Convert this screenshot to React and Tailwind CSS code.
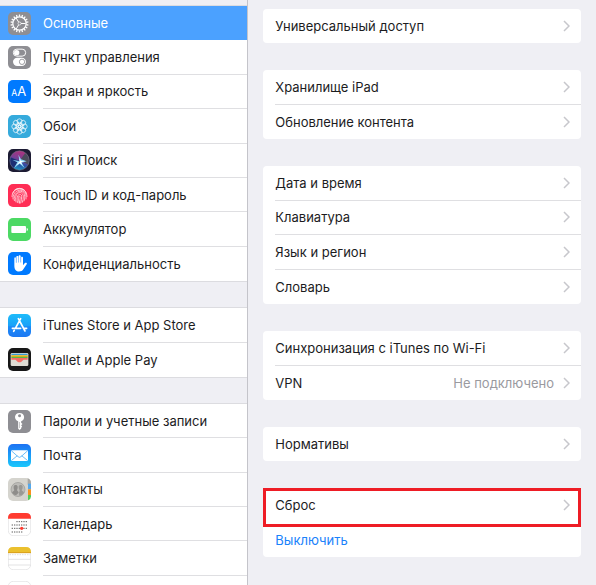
import React from "react";

const Tile = ({ fill, children }) => (
  <svg viewBox="0 0 69 69" className="size-[23px] shrink-0" aria-hidden="true">
    <rect width="69" height="69" rx="15" fill={fill} />
    {children}
  </svg>
);

const range = (n) => Array.from({ length: n }, (_, i) => i);

const GearIcon = () => (
  <Tile fill="#8e8e93">
    <g fill="none" stroke="#fff">
      <circle cx="34.5" cy="34.5" r="20" strokeWidth="3.500" />
      <circle cx="34.5" cy="34.5" r="4.500" strokeWidth="2" />
      <path d="M39 34.5h14M32 30.500l-8-13M32 38.500l-8 13" strokeWidth="3" />
      {range(18).map((i) => (
        <path key={i} d="M34.5 14V7.500" strokeWidth="4" transform={`rotate(${i * 20} 34.5 34.5)`} />
      ))}
    </g>
  </Tile>
);

const ControlIcon = () => (
  <Tile fill="#8e8e93">
    <rect x="16" y="9.500" width="37" height="21" rx="10.500" fill="none" stroke="#fff" strokeWidth="3" />
    <circle cx="26" cy="20" r="8" fill="#fff" />
    <rect x="15" y="35" width="39" height="25" rx="12.500" fill="#fff" />
    <circle cx="42" cy="47.500" r="8" fill="#fff" stroke="#8e8e93" strokeWidth="2.500" />
  </Tile>
);

const DisplayIcon = () => (
  <Tile fill="#007aff">
    <g fill="#fff" fontFamily="Inter, sans-serif">
      <text x="10" y="47" fontSize="26">A</text>
      <text x="28" y="47" fontSize="39">A</text>
    </g>
  </Tile>
);

const WallpaperIcon = () => (
  <Tile fill="#35aadc">
    <g fill="none" stroke="#fff" strokeWidth="2">
      {range(8).map((i) => (
        <circle key={i} cx="34.5" cy="19" r="7.500" transform={`rotate(${i * 45} 34.5 34.5)`} />
      ))}
      {range(8).map((i) => (
        <circle key={i} cx="34.5" cy="26.500" r="4.500" transform={`rotate(${i * 45 + 22} 34.5 34.5)`} strokeWidth="1.500" />
      ))}
      <circle cx="34.5" cy="34.5" r="4" />
    </g>
  </Tile>
);

const SiriIcon = () => (
  <Tile fill="#1c1b33">
    <defs>
      <linearGradient id="siri" x1="0.600" y1="0" x2="0.300" y2="1">
        <stop offset="0" stopColor="#b0327c" />
        <stop offset="0.400" stopColor="#7a3f95" />
        <stop offset="0.650" stopColor="#2b4fa3" />
        <stop offset="1" stopColor="#1aa0c4" />
      </linearGradient>
    </defs>
    <circle cx="34.5" cy="34.5" r="29" fill="url(#siri)" />
    <path d="M37 33L52 11a29 29 0 0 1 9 36z" fill="#4a4c5c" />
    <path d="M35 36L7 25a29 29 0 0 0 10 33z" fill="#1b2f74" />
    <path d="M35 37l-4-20 8 14 17 6-15 4 9 16-15-13-17 13 10-17-14-7 15 2z" fill="#8ed6f6" />
    <path d="M35 38l-1-10 4 7 11 3-10 2 4 8-8-6-9 7 6-9z" fill="#fff" />
    <circle cx="34.5" cy="34.5" r="29" fill="none" stroke="#7b7d92" strokeWidth="1.500" />
  </Tile>
);

const TouchIdIcon = () => (
  <Tile fill="#ff2d55">
    <g fill="none" stroke="#ffe3e8" strokeWidth="2.300" strokeLinecap="round">
      <path d="M20 18a22 22 0 0 1 29 0" />
      <path d="M14 28a22 22 0 0 1 41 0" />
      <path d="M12 38c0-32 45-32 45 0" />
      <path d="M15 45c-3-32 39-36 39-7v7" />
      <path d="M19 50c-5-31 31-38 31-13 0 6 0 9-2 14" />
      <path d="M24 54c-8-32 21-36 22-17 0 7-1 12-3 18" />
      <path d="M29 56c-8-26 11-31 12-19 0 7-1 13-3 20" />
      <path d="M34 57c-3-9-5-20 0-21 4 0 2 12 0 21" />
    </g>
  </Tile>
);

const BatteryIcon = () => (
  <Tile fill="#4cd964">
    <rect x="10" y="24" width="44" height="21" rx="3" fill="#fff" />
    <path d="M56 30c5 0 5 9 0 9z" fill="#fff" />
  </Tile>
);

const HandIcon = () => (
  <Tile fill="#007aff">
    <path
      d="M19 34V19c0-4 5-4 5 0v13h1V15c0-4 6-4 6 0v16h1V13c0-4 6-4 6 0v18h1V17c0-4 6-4 6 0v23l5-6c3-3 9-1 6 3L46 52c-4 8-20 10-25 0-2-4-2-11-2-18z"
      fill="#fff"
    />
    <path d="M24.500 17v15M31.500 15v17M38.500 15v17" stroke="#79b8ff" strokeWidth="1.500" />
  </Tile>
);

const AppStoreIcon = () => (
  <Tile fill="url(#store)">
    <defs>
      <linearGradient id="store" x1="0" y1="0" x2="0" y2="1">
        <stop offset="0" stopColor="#1ebcfa" />
        <stop offset="0.500" stopColor="#1ba2f8" />
        <stop offset="0.550" stopColor="#1c8bf7" />
        <stop offset="1" stopColor="#1d78f2" />
      </linearGradient>
    </defs>
    <g stroke="#fff" strokeWidth="5" strokeLinecap="round">
      <path d="M31 14l20 37M38 14L22 43M13 43h25M46 43h10M19 49l-2 3" />
    </g>
  </Tile>
);

const WalletIcon = () => (
  <Tile fill="#171717">
    <rect x="8" y="15" width="53" height="39" rx="4" fill="#dedbd3" />
    <path d="M10 22v-2q0-3 3-3h43q3 0 3 3v2z" fill="#359bd5" />
    <path d="M10 22h49v5H10z" fill="#ffb400" />
    <path d="M10 26h49v4H10z" fill="#5cb64b" />
    <path d="M10 30h49v5H48c-4 0-6 8-13.500 8S25 35 21 35H10z" fill="#f66b62" />
  </Tile>
);

const KeyIcon = () => (
  <Tile fill="#8e8e93">
    <path
      fillRule="evenodd"
      d="M34.5 9c17 0 18 21 5 25v4l4 4-4 4 3 4-3 3v3l-5 4-4-4V34C17 29 18 9 34.5 9zm0 4a4.500 4.500 0 1 0 .1 9 4.500 4.500 0 0 0-.1-9z"
      fill="#fff"
    />
    <path d="M34.5 36v18" stroke="#8e8e93" strokeWidth="1.500" />
  </Tile>
);

const MailIcon = () => (
  <Tile fill="url(#mail)">
    <defs>
      <linearGradient id="mail" x1="0" y1="0" x2="0" y2="1">
        <stop offset="0" stopColor="#1d72f3" />
        <stop offset="1" stopColor="#1ac8fc" />
      </linearGradient>
    </defs>
    <rect x="9" y="19" width="51" height="32" rx="4" fill="#fff" />
    <path d="M11 21l19 17q4.500 4 9 0l19-17M11 49l17-14M58 49L41 35" fill="none" stroke="#249bf3" strokeWidth="2" />
  </Tile>
);

const ContactsIcon = () => (
  <Tile fill="#d5d4ce">
    <path d="M59 1q10 3 10 14v5H59z" fill="#a9a8a4" />
    <path d="M60 17h9v17h-9z" fill="#55a9ec" />
    <path d="M60 34h9v17h-9z" fill="#f7901e" />
    <path d="M60 51h9v4q0 8-9 12z" fill="#53cf55" />
    <circle cx="30" cy="34.500" r="21" fill="#bdbcb8" stroke="#999894" strokeWidth="2" />
    <path d="M17 27c0-8 12-8 12 0 0 5-1 7-2 9 1 3 4 4 5 8l-8 8C16 50 13 46 12 43c2-3 6-4 7-7-2-3-2-6-2-9z" fill="#8e8d8a" />
    <path d="M32 27c0-8 12-8 12 0 0 4-1 7-3 9 1 3 5 4 7 7-2 5-7 9-14 10l-1-8c0-3 2-5 2-8-2-3-3-6-3-10z" fill="#999894" />
  </Tile>
);

const CalendarIcon = () => (
  <Tile fill="#fff">
    <rect x="1" y="1" width="67" height="67" rx="15" fill="none" stroke="#dcdcde" strokeWidth="2" />
    <path d="M0 17v-2Q0 0 15 0h39q15 0 15 15v2z" fill="#ff3b30" />
    <g stroke="#3c3c3c" strokeWidth="2.500" strokeDasharray="4 3">
      <path d="M25 26h34M11 36h48M11 46h48M11 57h34" />
    </g>
    <circle cx="41" cy="46" r="5" fill="#ff3b30" />
  </Tile>
);

const NotesIcon = () => (
  <Tile fill="#fff">
    <rect x="1" y="1" width="67" height="67" rx="15" fill="none" stroke="#dcdcde" strokeWidth="2" />
    <path d="M0 18v-3Q0 0 15 0h39q15 0 15 15v3z" fill="#ebc02d" />
    <path d="M0 17h69" stroke="#d99e1c" strokeWidth="3" />
    <path d="M2 23h65" stroke="#b9b9b9" strokeWidth="2" strokeDasharray="2 3" />
    <path d="M1 37h67M1 54h67" stroke="#d4d4d6" strokeWidth="2" />
  </Tile>
);

const BlankIcon = () => (
  <Tile fill="#fff">
    <rect x="1" y="1" width="67" height="67" rx="15" fill="none" stroke="#dcdcde" strokeWidth="2" />
  </Tile>
);

const menuGroups = [
  {
    size: "min-h-[275px]",
    items: [
      { label: "Основные", Icon: GearIcon, active: true },
      { label: "Пункт управления", Icon: ControlIcon },
      { label: "Экран и яркость", Icon: DisplayIcon },
      { label: "Обои", Icon: WallpaperIcon },
      { label: "Siri и Поиск", Icon: SiriIcon },
      { label: "Touch ID и код-пароль", Icon: TouchIdIcon },
      { label: "Аккумулятор", Icon: BatteryIcon },
      { label: "Конфиденциальность", Icon: HandIcon },
    ],
  },
  {
    size: "min-h-[69px]",
    items: [
      { label: "iTunes Store и App Store", Icon: AppStoreIcon },
      { label: "Wallet и Apple Pay", Icon: WalletIcon },
    ],
  },
  {
    size: "min-h-[206px]",
    items: [
      { label: "Пароли и учетные записи", Icon: KeyIcon },
      { label: "Почта", Icon: MailIcon },
      { label: "Контакты", Icon: ContactsIcon },
      { label: "Календарь", Icon: CalendarIcon },
      { label: "Заметки", Icon: NotesIcon },
      { label: "", Icon: BlankIcon },
    ],
  },
];

const cards = [
  { size: "min-h-[34px]", rows: [{ label: "Универсальный доступ" }] },
  { size: "min-h-[69px]", rows: [{ label: "Хранилище iPad" }, { label: "Обновление контента" }] },
  {
    size: "min-h-[138px]",
    rows: [{ label: "Дата и время" }, { label: "Клавиатура" }, { label: "Язык и регион" }, { label: "Словарь" }],
  },
  {
    size: "min-h-[69px]",
    rows: [{ label: "Синхронизация с iTunes по Wi-Fi" }, { label: "VPN", value: "Не подключено" }],
  },
  { size: "min-h-[34px]", rows: [{ label: "Нормативы" }] },
  { size: "min-h-[69px]", rows: [{ label: "Сброс", marked: true }, { label: "Выключить", action: true }] },
];

const Chevron = () => (
  <svg viewBox="0 0 7 12" className="h-3 w-[7px] shrink-0" fill="none" stroke="#c7c7cc" strokeWidth="1.500" aria-hidden="true">
    <path d="M1 1l5 5-5 5" />
  </svg>
);

const MenuItem = ({ label, Icon, active, last }) => (
  <a href="#" aria-current={active ? "page" : undefined} className={`flex gap-3 pl-2 ${active ? "bg-[#4ba1ff] text-white" : ""}`}>
    <span className="flex items-center">
      <Icon />
    </span>
    <span className={`flex flex-1 items-center whitespace-nowrap ${active || last ? "" : "border-b border-[#dfdfe2]"}`}>
      {label}
    </span>
  </a>
);

const CardRow = ({ label, value, action, marked, last }) => {
  if (action) {
    return (
      <button type="button" className="cursor-pointer pl-3 text-left text-[#1a82fb]">
        {label}
      </button>
    );
  }

  return (
    <a href="#" className="relative flex pl-3">
      <span className={`flex flex-1 items-center justify-between pr-[11px] ${last || marked ? "" : "border-b border-[#dfdfe2]"}`}>
        <span>{label}</span>
        <span className="flex items-center gap-[9px] text-[#9a9a9f]">
          {value}
          <Chevron />
        </span>
      </span>
      {marked && <span className="pointer-events-none absolute inset-x-0 top-0 -bottom-1 border-3 border-[#ee1c25]" />}
    </a>
  );
};

const App = () => (
  <div className="flex h-screen overflow-hidden bg-[#efeff4] font-['Inter',sans-serif] text-[13px] leading-5 text-[#1c1c1e]">
    <nav className="flex w-5/12 shrink-0 flex-col gap-[27px] overflow-hidden border-r border-[#c4c4ca] pt-1.5">
      {menuGroups.map((group, i) => (
        <div key={i} className={`grid shrink-0 auto-rows-fr bg-white ring-1 ring-[#dcdce0] ${group.size}`}>
          {group.items.map((item, j) => (
            <MenuItem key={j} {...item} last={j === group.items.length - 1} />
          ))}
        </div>
      ))}
    </nav>

    <main className="flex flex-1 flex-col gap-[27px] px-[15px] pt-[9px]">
      {cards.map((card, i) => (
        <section key={i} className={`grid shrink-0 auto-rows-fr rounded-sm bg-white ${card.size}`}>
          {card.rows.map((row, j) => (
            <CardRow key={row.label} {...row} last={j === card.rows.length - 1} />
          ))}
        </section>
      ))}
    </main>
  </div>
);

export default App;
